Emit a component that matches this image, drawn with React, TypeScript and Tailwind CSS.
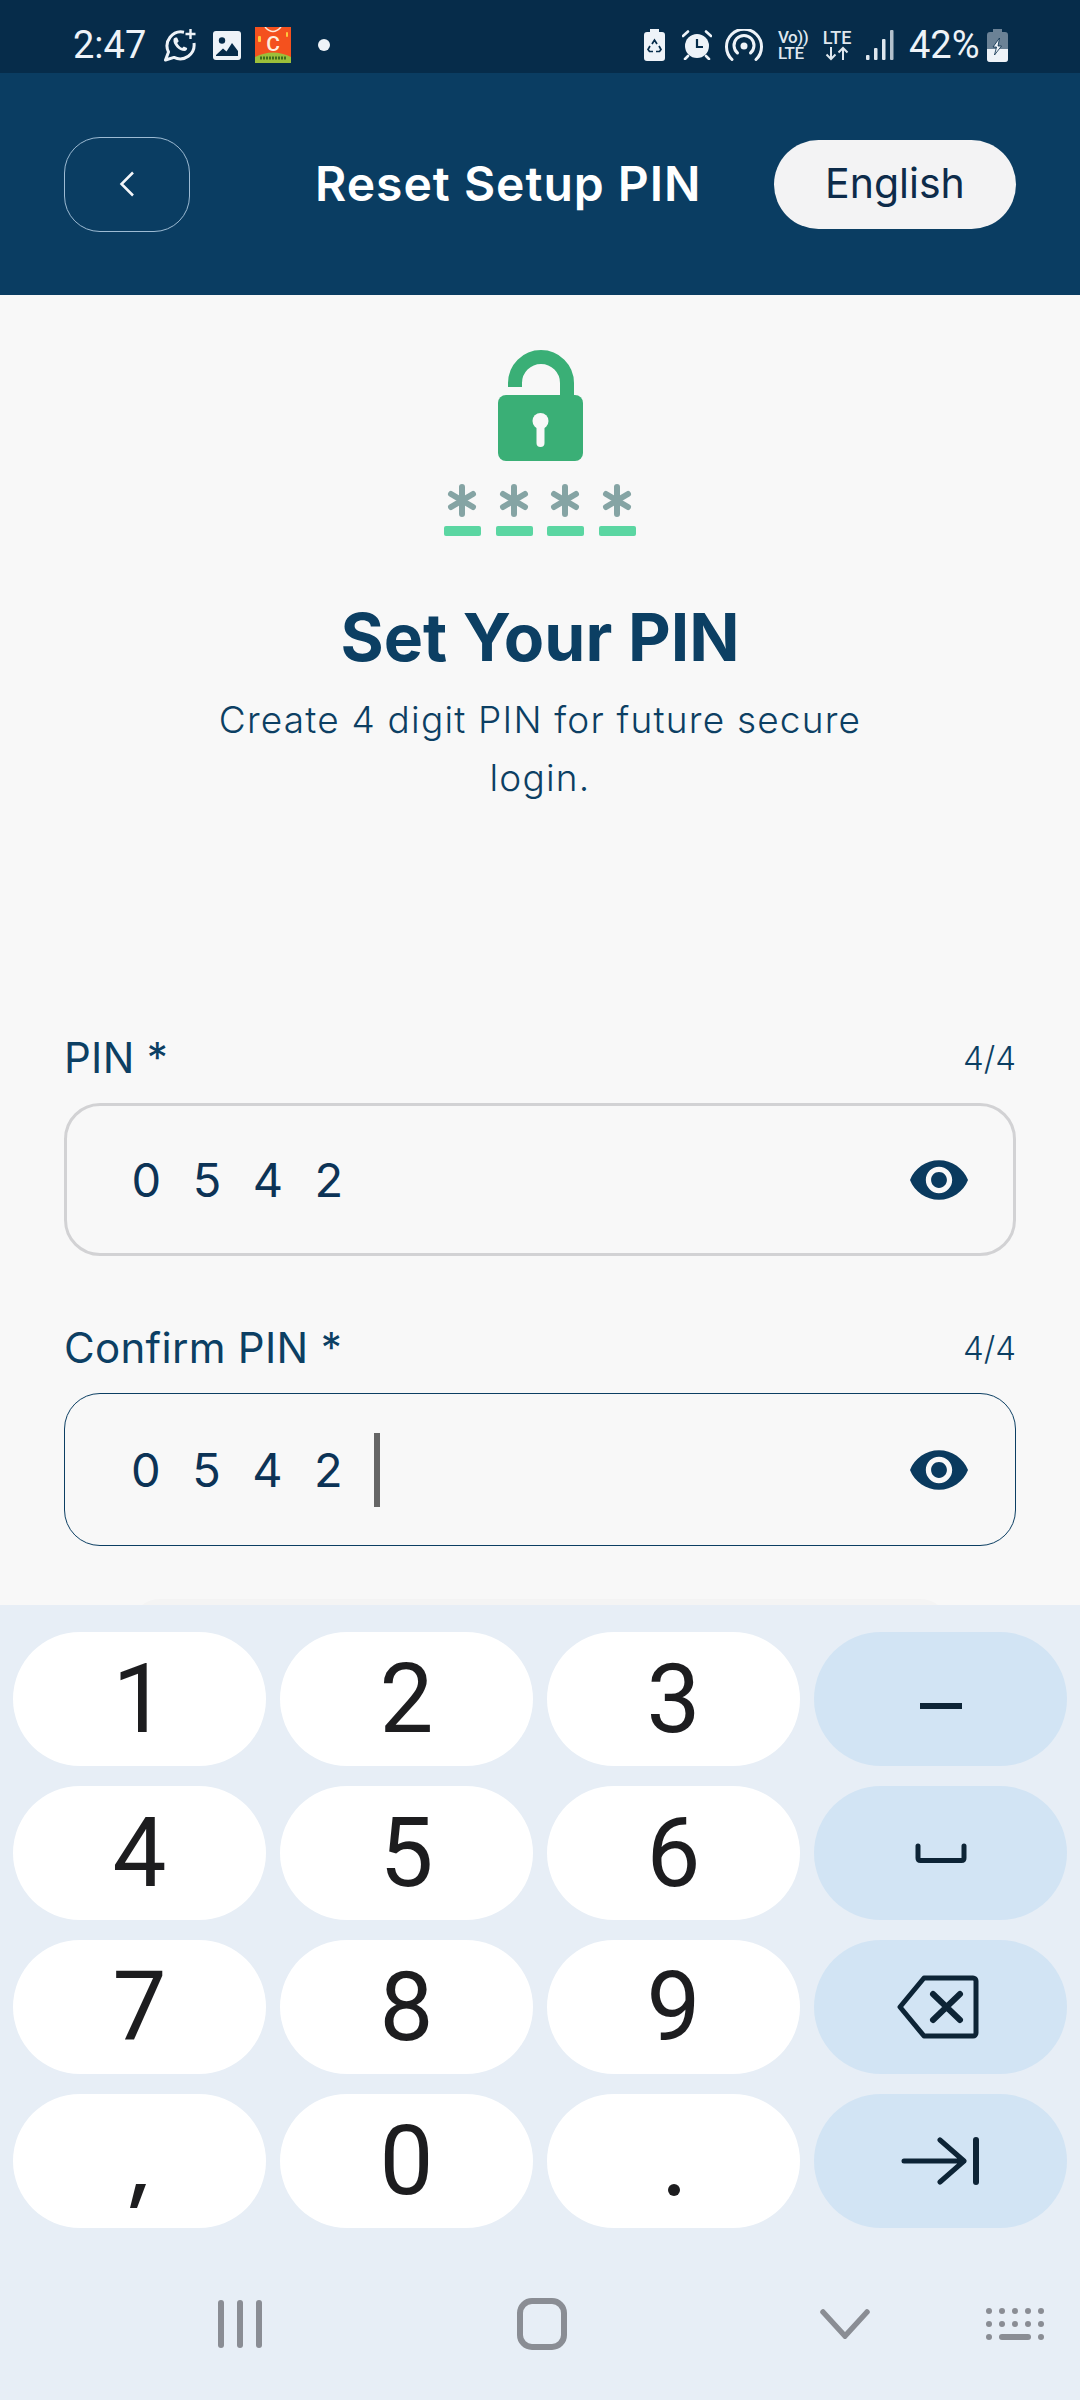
const eyePath =
  'M12 4.5C7 4.5 2.73 7.61 1 12c1.73 4.39 6 7.5 11 7.5s9.27-3.11 11-7.5c-1.73-4.39-6-7.5-11-7.5zM12 17c-2.76 0-5-2.24-5-5s2.24-5 5-5 5 2.24 5 5-2.24 5-5 5zm0-8c-1.66 0-3 1.34-3 3s1.34 3 3 3 3-1.34 3-3-1.34-3-3-3z';

function WhatsAppIcon() {
  return (
    <svg width="35" height="34" viewBox="0 0 35 34" fill="none" stroke="#eef3f8" strokeWidth="3">
      <path d="M21 4.200A14 14 0 0 0 5.500 24L2.500 32l8.500-2.600A14 14 0 0 0 31 15" strokeLinejoin="round" />
      <path
        d="M10.500 11.500c-.8 5 5.500 11.500 11 11.500 1.500 0 3-2 2.600-3l-3.300-1.600-1.600 1.500c-2-.8-4-2.800-5-5l1.500-1.700-1.500-3.500c-1-.3-3.500 0-3.700 1.800z"
        fill="#eef3f8"
        stroke="none"
      />
      <path d="M27.500 1v10M22.500 6h10" strokeWidth="2.400" />
    </svg>
  );
}

function ImageIcon() {
  return (
    <svg width="28" height="29" viewBox="0 0 28 29">
      <rect width="28" height="29" rx="3" fill="#eef3f8" />
      <circle cx="9" cy="9.500" r="3.200" fill="#062c4a" />
      <path d="M3 24l7-6.500 3.500 3L19 12l6 8v5H3z" fill="#062c4a" />
    </svg>
  );
}

function AppIcon() {
  return (
    <svg width="36" height="36" viewBox="0 0 36 36">
      <rect width="36" height="36" fill="#f4511e" />
      <path d="M0 30q18-9 36 0v6H0z" fill="#9cbf3a" />
      <path d="M5 31h26" stroke="#3f6f1c" strokeWidth="3" strokeDasharray="2 1" />
      <path d="M10 0q8 9 16 0" fill="none" stroke="#ffe9d8" strokeWidth="1.500" />
      <text x="18" y="24" textAnchor="middle" fontFamily="Roboto, sans-serif" fontSize="21" fontWeight="500" fill="#ffeede">
        C
      </text>
      <rect x="3" y="9" width="3" height="6" rx="1" fill="#ffc93c" />
      <rect x="31" y="5" width="2" height="5" rx="1" fill="#ffc93c" />
    </svg>
  );
}

function RecycleBatteryIcon() {
  return (
    <svg width="21" height="32" viewBox="0 0 21 32">
      <path d="M6 0h9v3h3a3 3 0 0 1 3 3v23a3 3 0 0 1-3 3H3a3 3 0 0 1-3-3V6a3 3 0 0 1 3-3h3z" fill="#eef3f8" />
      <path d="M8 15l2.500-4 2.500 4M15 17l2 3.500-1.500 2H12M9 22.500H5.500L4 20.500 6 17" fill="none" stroke="#062c4a" strokeWidth="1.700" />
    </svg>
  );
}

function AlarmIcon() {
  return (
    <svg width="30" height="30" viewBox="0 0 30 30">
      <circle cx="15" cy="16" r="12" fill="#eef3f8" />
      <path d="M15 9v8h6" fill="none" stroke="#062c4a" strokeWidth="2.200" />
      <path d="M1 6l5-4.500M29 6l-5-4.500M3 29l3-3M27 29l-3-3" stroke="#eef3f8" strokeWidth="2.600" strokeLinecap="round" />
    </svg>
  );
}

function HotspotIcon() {
  return (
    <svg width="38" height="32" viewBox="0 0 38 32" fill="none" stroke="#eef3f8" strokeWidth="3" strokeLinecap="round">
      <path d="M7 30.500A17.500 17.500 0 1 1 31 30.500" />
      <path d="M12.500 24a10 10 0 1 1 13 0" />
      <circle cx="19" cy="17" r="3.500" fill="#eef3f8" stroke="none" />
    </svg>
  );
}

function SignalIcon() {
  return (
    <svg width="28" height="30" viewBox="0 0 28 30" fill="#dfe7ee">
      <rect x="0" y="25" width="3.500" height="5" rx="1" />
      <rect x="8" y="18" width="3.500" height="12" rx="1" />
      <rect x="16" y="9" width="3.500" height="21" rx="1" />
      <rect x="24" y="0" width="3.500" height="30" rx="1" opacity="0.8" />
    </svg>
  );
}

function ChargingBatteryIcon() {
  return (
    <svg width="21" height="33" viewBox="0 0 21 33">
      <path d="M6 0h9v3h3a3 3 0 0 1 3 3v24a3 3 0 0 1-3 3H3a3 3 0 0 1-3-3V6a3 3 0 0 1 3-3h3z" fill="#6b8296" />
      <path d="M0 20h21v10a3 3 0 0 1-3 3H3a3 3 0 0 1-3-3z" fill="#eef3f8" />
      <path d="M12.500 9L6 18h3.500L7.500 26l7-9h-3.500z" fill="#eef3f8" stroke="#062c4a" strokeWidth="0.800" />
    </svg>
  );
}

function StatusBar() {
  return (
    <div className="h-[73px] bg-[#062c4a] flex items-center pt-[17px] pl-[73px] pr-[72px] text-[#eef3f8]">
      <span className="text-[38px] font-[Roboto] leading-none w-[90px]">2:47</span>
      <WhatsAppIcon />
      <div className="ml-[15px]"><ImageIcon /></div>
      <div className="ml-[14px]"><AppIcon /></div>
      <div className="ml-[27px] w-3 h-3 rounded-full bg-[#eef3f8]" />
      <div className="ml-auto flex items-center">
        <RecycleBatteryIcon />
        <div className="ml-[17px]"><AlarmIcon /></div>
        <div className="ml-[13px]"><HotspotIcon /></div>
        <div className="ml-[15px] w-[31px] flex flex-col items-start font-[Roboto] font-medium text-[17px] leading-[16px] tracking-[-0.5px] text-[#dfe7ee]">
          <span>Vo))</span>
          <span>LTE</span>
        </div>
        <div className="ml-[12px] w-[32px] flex flex-col items-center font-[Roboto] font-medium text-[18px] leading-[17px] text-[#dfe7ee]">
          <span>LTE</span>
          <svg width="24" height="15" viewBox="0 0 24 15" fill="none" stroke="#dfe7ee" strokeWidth="2">
            <path d="M6 1v12M1.500 8.500L6 13l4.500-4.500M18 14V2M13.500 6.500L18 2l4.500 4.500" />
          </svg>
        </div>
        <div className="ml-[13px]"><SignalIcon /></div>
        <span className="ml-[15px] w-[78px] text-[38px] font-[Roboto] leading-none">42%</span>
        <ChargingBatteryIcon />
      </div>
    </div>
  );
}

function Header() {
  return (
    <div className="h-[222px] bg-[#0a3d62] flex items-center pl-[64px] pr-[64px]">
      <button className="w-[126px] h-[95px] rounded-[36px] border border-[#9dbbd3] flex items-center justify-center">
        <svg width="16" height="26" viewBox="0 0 16 26" fill="none" stroke="#f4f7fa" strokeWidth="2.500">
          <path d="M14 1.500L2.500 13 14 24.500" />
        </svg>
      </button>
      <h1 className="ml-[125px] text-[48px] font-semibold text-white font-[Inter] tracking-[1px] whitespace-nowrap">Reset Setup PIN</h1>
      <div className="ml-auto w-[242px] h-[89px] rounded-full bg-[#f3f3f4] flex items-center justify-center text-[41px] text-[#0d2b4a] font-[Inter]">
        English
      </div>
    </div>
  );
}

function LockGraphic() {
  return (
    <svg width="194" height="190" viewBox="0 0 194 190" className="block shrink-0">
      <path d="M72 39v-4a26 26 0 0 1 52 0v15" fill="none" stroke="#3aaf76" strokeWidth="14" />
      <rect x="55" y="47" width="85" height="66" rx="8" fill="#3aaf76" />
      <circle cx="97.500" cy="73" r="8" fill="#f8f8f8" />
      <rect x="93.500" y="75" width="8" height="24" rx="4" fill="#f8f8f8" />
      {[19, 71, 122, 174].map(x => (
        <g key={x}>
          <path d={`M${x} 139v27M${x - 11} 146l22 13M${x + 11} 146l-22 13`} stroke="#85a4a4" strokeWidth="6" strokeLinecap="round" />
          <rect x={x - 18} y="178" width="37" height="10" rx="2" fill="#5bd6a2" />
        </g>
      ))}
    </svg>
  );
}

function PinField({ label, active }: { label: string; active?: boolean }) {
  return (
    <div>
      <div className="flex items-center justify-between h-[46px] font-[Inter]">
        <span className="text-[42px] leading-none text-[#0c3f63] tracking-[0.3px]">{label} *</span>
        <span className="text-[33px] leading-none font-light text-[#0c3f63]">4/4</span>
      </div>
      <div
        className={`mt-[22px] h-[153px] rounded-[36px] flex items-center ${
          active ? 'pl-[66px] pr-[47px] border-[1.5px] border-[#0c3f63]' : 'pl-[64.5px] pr-[45.5px] border-[3px] border-[#d2d2d4]'
        }`}
      >
        <span className="text-[47px] leading-none font-[Inter] text-[#0c3356] tracking-[31.5px]">0542</span>
        {active && <span className="w-[6px] h-[74px] bg-[#666666]" />}
        <svg width="58" height="40" viewBox="1 4.500 22 15" fill="#0a3a5e" className="ml-auto">
          <path d={eyePath} />
        </svg>
      </div>
    </div>
  );
}

function Key({ children, side }: { children: React.ReactNode; side?: boolean }) {
  return (
    <div
      className={`h-[134px] rounded-full flex items-center justify-center ${
        side ? 'bg-[#d2e4f4]' : 'bg-white'
      }`}
    >
      {children}
    </div>
  );
}

function Digit({ value }: { value: string }) {
  return <span className="text-[96px] leading-none font-[Roboto] font-[380] text-[#1d1d1f]">{value}</span>;
}

function Keyboard() {
  const keys = ['1', '2', '3', '-', '4', '5', '6', 'space', '7', '8', '9', 'back', ',', '0', '.', 'next'];
  return (
    <div className="h-[795px] shrink-0 bg-[#e7eef6] flex flex-col">
      <div className="mt-[27px] px-[13px] grid grid-cols-4 gap-x-[14px] gap-y-[20px]">
        {keys.map(k => {
          if (k === '-')
            return (
              <Key key={k} side>
                <div className="w-[42px] h-[6px] mt-[14px] bg-[#0d2436]" />
              </Key>
            );
          if (k === 'space')
            return (
              <Key key={k} side>
                <svg width="52" height="20" viewBox="0 0 52 20" fill="none" stroke="#0d2436" strokeWidth="5" strokeLinecap="round" strokeLinejoin="round">
                  <path d="M3 3v12q0 2.500 2.500 2.500h41q2.500 0 2.500-2.500V3" />
                </svg>
              </Key>
            );
          if (k === 'back')
            return (
              <Key key={k} side>
                <svg width="82" height="66" viewBox="0 0 82 66" className="-ml-[6px]" fill="none" stroke="#0d2436" strokeWidth="5" strokeLinecap="round" strokeLinejoin="round">
                  <path d="M3 33L27 4h49a3 3 0 0 1 3 3v52a3 3 0 0 1-3 3H27z" />
                  <path d="M36 20l27 26M63 20L36 46" strokeWidth="6" />
                </svg>
              </Key>
            );
          if (k === 'next')
            return (
              <Key key={k} side>
                <svg width="78" height="48" viewBox="0 0 78 48" className="-ml-[2px]" fill="none" stroke="#0d2436" strokeWidth="5" strokeLinecap="round" strokeLinejoin="round">
                  <path d="M3 24h60M39 3l24 21-24 21" />
                  <path d="M75 3v42" strokeWidth="6" />
                </svg>
              </Key>
            );
          if (k === ',')
            return (
              <Key key={k}>
                <svg width="16" height="24" viewBox="0 0 16 24" className="mt-[70px] -ml-[4px]">
                  <path d="M6 0h10L7 24H0z" fill="#1d1d1f" />
                </svg>
              </Key>
            );
          if (k === '.')
            return (
              <Key key={k}>
                <div className="w-[12px] h-[12px] mt-[58px] rounded-full bg-[#1d1d1f]" />
              </Key>
            );
          return (
            <Key key={k}>
              <Digit value={k} />
            </Key>
          );
        })}
      </div>
      <div className="flex-1 flex items-center pl-[218px] pt-[19px]">
        <div className="flex gap-[13px]">
          {[0, 1, 2].map(i => (
            <div key={i} className="w-[6px] h-[48px] rounded-full bg-[#8a8d94]" />
          ))}
        </div>
        <div className="ml-[255px] w-[50px] h-[52px] rounded-[15px] border-[6px] border-[#8a8d94]" />
        <svg width="50" height="30" viewBox="0 0 50 30" className="ml-[253px]" fill="none" stroke="#8a8d94" strokeWidth="5.500" strokeLinecap="round">
          <path d="M3 3l22 24L47 3" />
        </svg>
        <svg width="58" height="32" viewBox="0 0 58 32" className="ml-[116px]" fill="#8a8d94">
          {[0, 13, 26, 39, 52].map(x => (
            <g key={x}>
              <rect x={x} y="0" width="6" height="6" rx="3" />
              <rect x={x} y="13" width="6" height="6" rx="3" />
            </g>
          ))}
          <rect x="0" y="26" width="6" height="6" rx="3" />
          <rect x="13" y="26" width="32" height="6" rx="3" />
          <rect x="52" y="26" width="6" height="6" rx="3" />
        </svg>
      </div>
    </div>
  );
}

export default function App() {
  return (
    <div className="w-[1080px] h-[2400px] flex flex-col bg-[#f8f8f8] overflow-hidden font-[Inter]">
      <StatusBar />
      <Header />
      <main className="flex-1 min-h-0 overflow-hidden flex flex-col items-center pt-[53px]">
        <LockGraphic />
        <h2 className="mt-[59px] text-[66px] leading-[80px] font-bold text-[#0c3f63] font-[Inter] shrink-0">Set Your PIN</h2>
        <p className="mt-[14px] w-[680px] text-center text-[37px] leading-[58px] font-light tracking-[1.2px] text-[#0c3f63] shrink-0">
          Create 4 digit PIN for future secure login.
        </p>
        <div className="mt-[228px] w-[952px] flex flex-col gap-[69px] shrink-0">
          <PinField label="PIN" />
          <PinField label="Confirm PIN" active />
        </div>
        <div className="mt-[53px] w-[820px] h-[60px] shrink-0 rounded-t-[30px] bg-[#f4f4f4]" />
      </main>
      <Keyboard />
    </div>
  );
}
